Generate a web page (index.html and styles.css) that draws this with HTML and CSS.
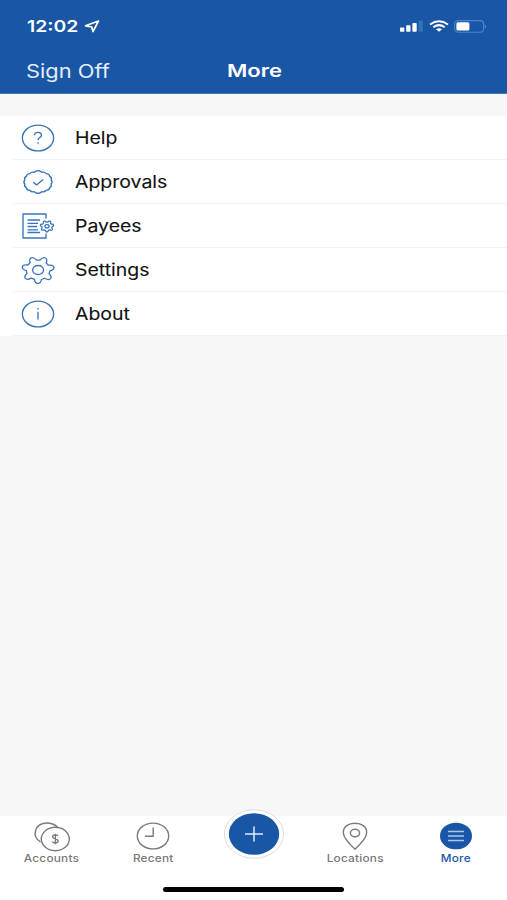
FILE: index.html
```html
<!DOCTYPE html>
<html lang="en">
<head>
<meta charset="utf-8">
<meta name="viewport" content="width=device-width, initial-scale=1">
<title>More</title>
<link rel="stylesheet" href="styles.css">
</head>
<body>
<div class="screen">
  <header class="header">
    <div class="status">
      <span class="time"><span class="wide">12:02</span></span>
      <svg class="nav-arrow" viewBox="0 0 16 13" width="16" height="13"><path d="M14.5 1 L1.500 5.800 L7.600 6.800 L9 11.600 Z"/></svg>
      <div class="indicators">
        <svg width="23" height="12" viewBox="0 0 23 12"><g fill="#fff"><rect x="0" y="7.5" width="4.300" height="4.3" rx=".8"/><rect x="6.200" y="5.300" width="4.300" height="6.500" rx=".8"/><rect x="12.400" y="3" width="4.300" height="8.800" rx=".8"/></g><rect x="18.700" y=".5" width="4" height="11.300" rx=".8" fill="#3472b8"/></svg>
        <svg width="20" height="12" viewBox="0 0 20 12"><g fill="none" stroke="#fff" stroke-width="2"><path d="M1 4.500Q10 -2 19 4.500"/><path d="M4.300 7.300Q10 3 15.700 7.300"/></g><path d="M7 9.300Q10 7.200 13 9.300L10 11.800Z" fill="#fff"/></svg>
        <svg width="33" height="13" viewBox="0 0 33 13"><rect x=".6" y=".6" width="29" height="11.600" rx="3.500" fill="none" stroke="#4d86c8" stroke-width="1.100"/><rect x="2.400" y="2.200" width="13" height="8.400" rx="1.500" fill="#fff"/><path d="M30.900 4.400Q32.900 6.400 30.900 8.400Z" fill="#6b9bd3"/></svg>
      </div>
    </div>
    <div class="title-bar">
      <a class="sign-off"><span class="wide">Sign Off</span></a>
      <h1 class="title"><span class="wide">More</span></h1>
    </div>
  </header>

  <main class="content">
    <ul class="menu">
      <li class="row">
        <svg class="icon" viewBox="0 0 36 32"><ellipse cx="18" cy="16" rx="15.600" ry="12.900"/><path d="M14.500 13.300C14.500 9.500 21.500 9.500 21.500 13.200C21.500 15.600 18 15.500 18 18.200M18 20.200V21.700"/></svg>
        <div class="label"><span class="wide">Help</span></div>
      </li>
      <li class="row">
        <svg class="icon" viewBox="0 0 36 32"><path d="M18 4.800Q20 4.500 21.700 6.300Q24.300 5.500 26.300 7.700Q29.300 7.800 29.700 10.400Q32.200 11.600 31.200 14Q33 16 31.200 18Q32.200 20.400 29.700 21.600Q29.300 24.200 26.300 24.300Q24.300 26.500 21.700 25.700Q20 27.500 18 27.200Q16 27.500 14.300 25.700Q11.700 26.500 9.700 24.300Q6.700 24.200 6.300 21.600Q3.800 20.400 4.800 18Q3 16 4.800 14Q3.800 11.600 6.300 10.400Q6.700 7.800 9.700 7.700Q11.700 5.500 14.300 6.300Q16 4.500 18 4.800Z"/><path d="M13.200 16.200L16.600 18.900L23.200 13.500"/></svg>
        <div class="label"><span class="wide">Approvals</span></div>
      </li>
      <li class="row">
        <svg class="icon" viewBox="0 0 36 32"><path d="M26 8.500V4H3V28H26V23.500M7.500 10H20M7.500 13.300H18M7.500 16.500H17M7.500 19.800H18M7.500 22.500H20"/><g class="small-gear" transform="translate(27 16.300) scale(.42)"><path d="M-8.200 -7.600C-10 -12.400 -4.900 -14.400 -1.700 -10.200L2 -10.200C5.300 -14.300 10.300 -12.200 8.400 -7.500L10.700 -5C16.600 -5.400 17.800 -.8 12.300 .9L11.400 3.900C15.400 7.500 11.900 11.200 6.800 8.600L3.400 9.900C2.600 14.800 -3 14.800 -3.700 9.800L-7.100 8.400C-12.200 10.900 -15.600 7.200 -11.500 3.700L-12.300 .6C-17.800 -1.200 -16.500 -5.800 -10.600 -5.200Z"/><ellipse rx="5" ry="4"/></g></svg>
        <div class="label"><span class="wide">Payees</span></div>
      </li>
      <li class="row">
        <svg class="icon" viewBox="0 0 36 32"><g transform="translate(18.100 16) scale(.96)"><path d="M-8.200 -7.600C-10.500 -12.900 -5.400 -14.900 -1.700 -10.200L2 -10.200C5.800 -14.800 10.800 -12.700 8.400 -7.500L10.700 -5C17.600 -5.900 18.800 -.8 12.300 .9L11.400 3.900C16.200 7.900 12.700 11.900 6.800 8.600L3.400 9.900C2.800 15.300 -3.200 15.300 -3.700 9.800L-7.100 8.400C-12.900 11.600 -16.500 7.700 -11.500 3.700L-12.300 .6C-18.700 -1.200 -17.400 -6.200 -10.600 -5.200Z"/><ellipse rx="5.700" ry="4.700"/></g></svg>
        <div class="label"><span class="wide">Settings</span></div>
      </li>
      <li class="row">
        <svg class="icon" viewBox="0 0 36 32"><ellipse cx="18" cy="16" rx="15.600" ry="12.900"/><path d="M18 13.800V21.500M18 10V11.600"/></svg>
        <div class="label"><span class="wide">About</span></div>
      </li>
    </ul>
  </main>

  <nav class="tabs">
    <a class="tab">
      <svg class="tab-icon" viewBox="-1 0 40 34"><path d="M8.500 23C-1 17 3 4 15 4Q21 4 25.500 8"/><ellipse cx="23.300" cy="20" rx="14" ry="11.700"/><path d="M26 17C25 15.300 20.600 15.500 20.600 17.800C20.600 20.400 26.200 19.500 26.200 22.100C26.200 24.500 21.500 24.500 20.300 22.700M23.400 14.700V25.300"/></svg>
      <span class="wide">Accounts</span>
    </a>
    <a class="tab">
      <svg class="tab-icon" viewBox="0 0 40 34"><ellipse cx="20" cy="17" rx="15.700" ry="12.900"/><path d="M20.200 8.500V17.200H12"/></svg>
      <span class="wide">Recent</span>
    </a>
    <a class="tab add">
      <svg viewBox="0 0 62 52" width="62" height="52"><ellipse cx="31" cy="26" rx="29.500" ry="24.300" fill="#fff" stroke="#ddd" stroke-width="1"/><ellipse cx="31" cy="26" rx="25.200" ry="20.800" fill="#1956a5"/><path d="M22 26H40M31 18.500V33.500" stroke="#e0ecfa" stroke-width="1.500"/></svg>
    </a>
    <a class="tab">
      <svg class="tab-icon" viewBox="0 0 40 34"><path d="M20 30.200Q8.300 19.500 8.300 13.600C8.300 7.600 13.500 4.200 20 4.200S31.700 7.600 31.700 13.600Q31.700 19.500 20 30.200Z"/><ellipse cx="20" cy="14" rx="4.600" ry="3.700"/></svg>
      <span class="wide">Locations</span>
    </a>
    <a class="tab active">
      <svg class="tab-icon" viewBox="0 0 40 34"><ellipse class="disc" cx="20" cy="17" rx="16" ry="13.300"/><path class="bars" d="M12 12.500H28M12 17H28M12 21.500H28"/></svg>
      <span class="wide">More</span>
    </a>
  </nav>
  <div class="home"><div class="home-bar"></div></div>
</div>
</body>
</html>
```
FILE: styles.css
```css
* { box-sizing: border-box; }
body { margin: 0; font-family: Inter, "Liberation Sans", sans-serif; }
.screen { width: 507px; height: 900px; display: flex; flex-direction: column; background: #fff; overflow: hidden; }
.wide { display: inline-block; transform: scaleX(1.18); transform-origin: left center; white-space: nowrap; }
.header { height: 94px; flex: none; background: #1956a5; color: #fff; border-bottom: 1px solid #4476b5; }
.status { height: 48px; padding: 4px 20px 0 27px; display: flex; align-items: center; }
.time { width: 57px; font-size: 16px; line-height: 20px; font-weight: 600; }
.time .wide { transform: scaleX(1.21); }
.nav-arrow { fill: none; stroke: #fff; stroke-width: 1.7; stroke-linejoin: round; }
.indicators { margin-left: auto; display: flex; align-items: center; gap: 5.5px; }
.title-bar { height: 45px; display: grid; grid-template-columns: 201px 1fr; align-items: center; padding-left: 26px; }
.sign-off { font-size: 18.5px; color: #e3eefb; }
.title { margin: 0; font-size: 17.5px; font-weight: 600; }
.title .wide { transform: scaleX(1.26); }
.content { flex: 1; background: #f7f7f7; padding-top: 22px; }
.menu { list-style: none; margin: 0; padding: 0; background: #fff; }
.row { height: 44.1px; display: flex; align-items: stretch; padding-left: 13px; background: linear-gradient(#f2f2f2, #f2f2f2) 13px 100% / 100% 1px no-repeat; }
.icon { width: 36px; height: 32px; margin: 6px 18.5px 0 7px; flex: none; fill: none; stroke: #3874ba; stroke-width: 1.35; stroke-linejoin: round; }
.small-gear { stroke-width: 3; }
.label { display: flex; align-items: center; font-size: 17px; font-weight: 400; color: #111; -webkit-text-stroke: .1px #111; }
.label .wide { transform: scaleX(1.145); }
.tabs { height: 61px; flex: none; display: grid; grid-template-columns: repeat(5, 100.8px); padding-left: 2px; }
.tab { display: flex; flex-direction: column; align-items: center; padding-top: 3px; color: #777; font-size: 10px; line-height: 12px; font-weight: 500; letter-spacing: .2px; }
.tab .wide { transform-origin: center; margin-top: -1px; }
.tab:first-child { padding-right: 2px; }
.tab-icon { width: 40px; height: 34px; fill: none; stroke: #7a7a7a; stroke-width: 1.4; stroke-linejoin: round; }
.add { padding: 0; margin-top: -8px; }
.active { color: #1956a5; }
.disc { fill: #1956a5; stroke: none; }
.bars { stroke: #a9c9ed; stroke-width: 1.3; }
.home { height: 23px; flex: none; display: flex; justify-content: center; padding-top: 10px; }
.home-bar { width: 181px; height: 5px; border-radius: 3px; background: #000; }
```
